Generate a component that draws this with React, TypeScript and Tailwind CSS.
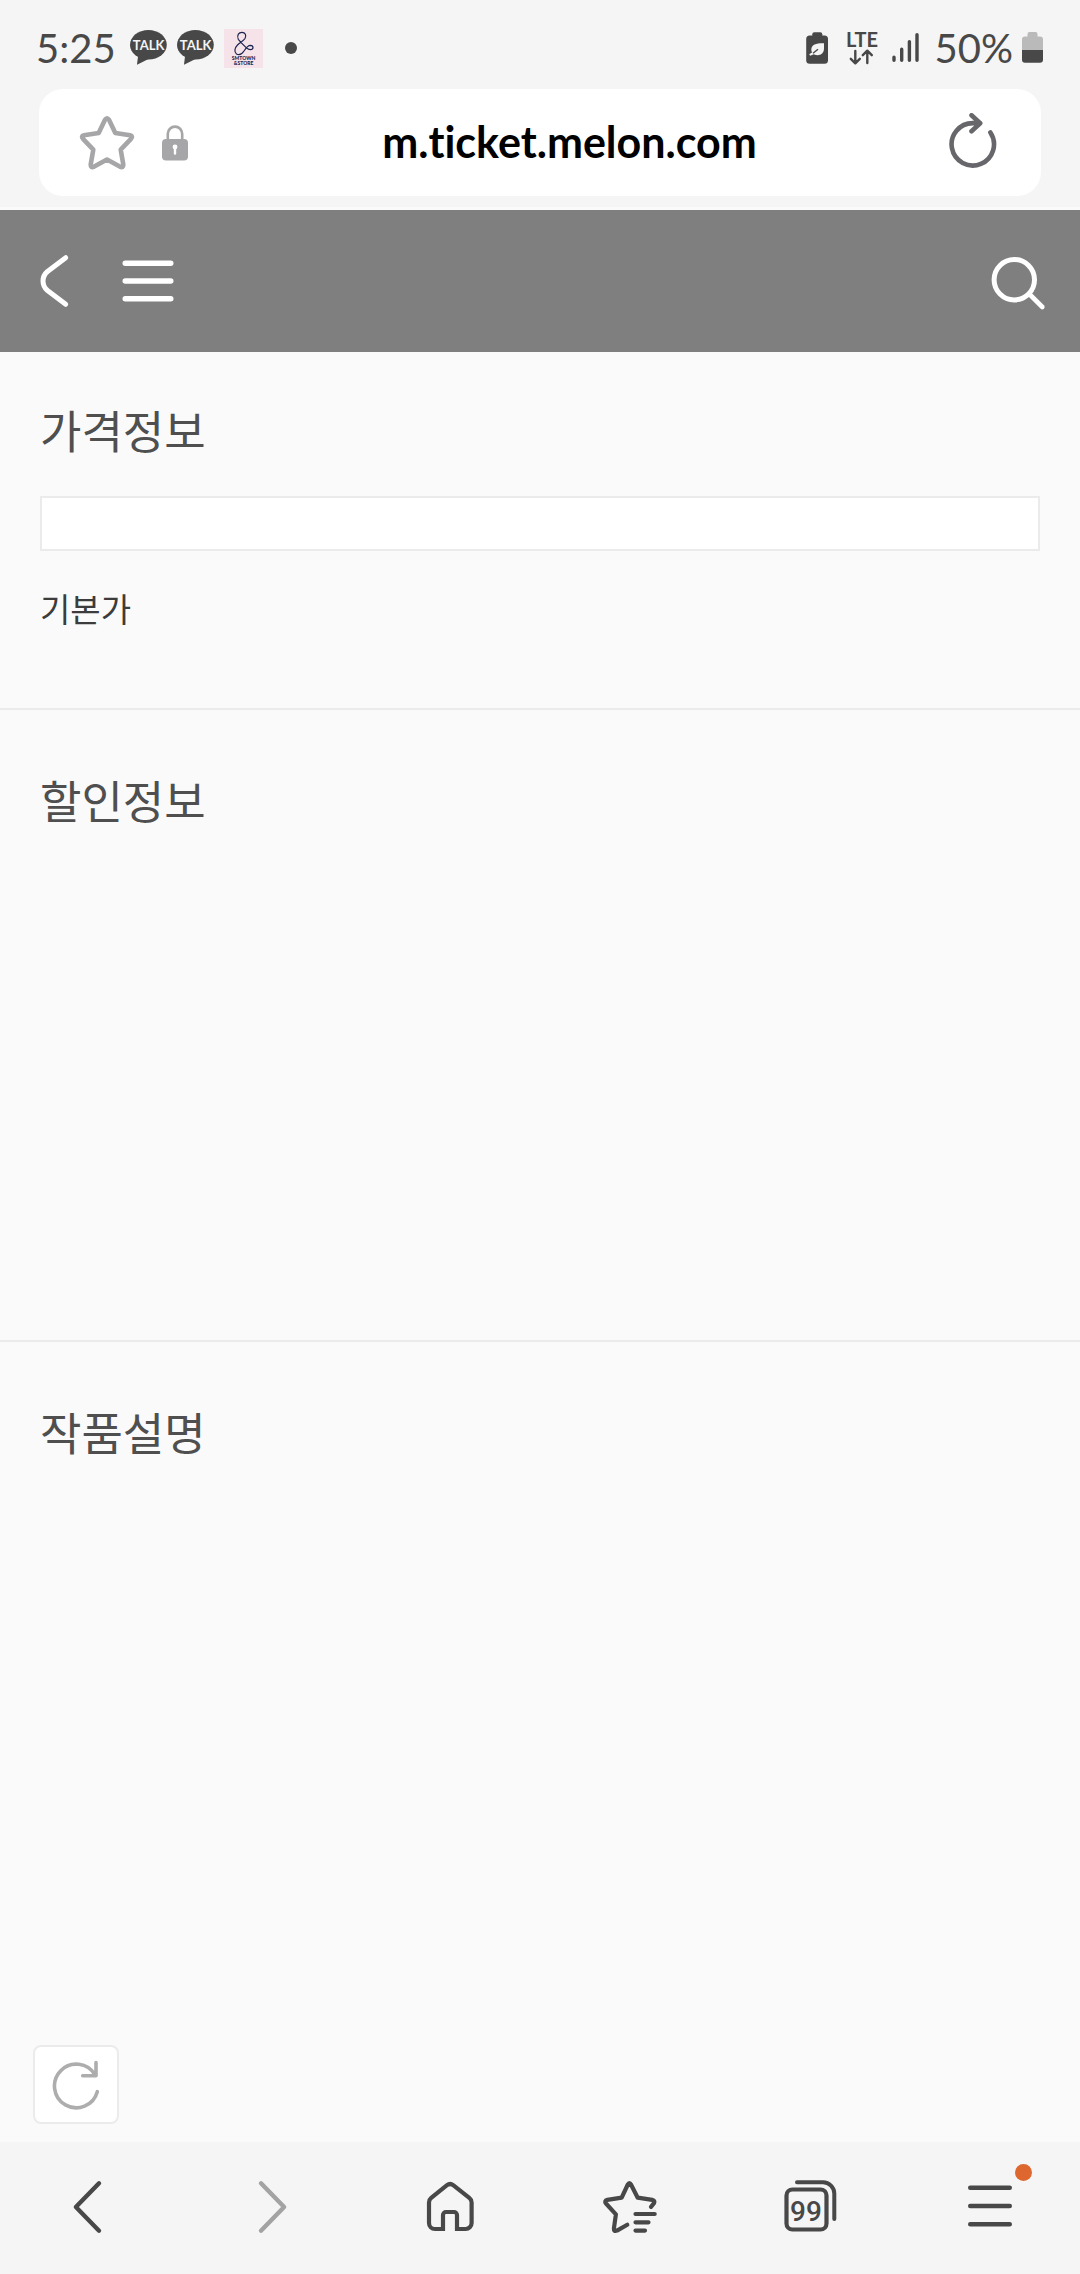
import React from "react";

const strokeProps = {
  fill: "none",
  stroke: "currentColor",
  strokeLinecap: "round" as const,
  strokeLinejoin: "round" as const,
};

const TalkIcon = () => (
  <svg width="38" height="36" viewBox="0 0 38 36" className="text-[#484848]">
    <ellipse cx="18.4" cy="14.8" rx="18.4" ry="14.8" fill="currentColor" />
    <path d="M8.3 24L7 34.8L18.5 29Z" fill="currentColor" />
    <text x="18.6" y="20" textAnchor="middle" fill="#f5f5f5" className="text-[13px] font-bold">
      TALK
    </text>
  </svg>
);

const StoreIcon = () => (
  <svg width="39" height="39" viewBox="0 0 39 39">
    <rect width="39" height="39" fill="#f6e3e9" />
    <path
      d="M14.3 10.3C12.5 6 15 3.3 17.9 3.3C21.3 3.3 22.7 6.5 21 9.5C19.5 12 16 13.5 13.5 16C10.5 19 10 23 12.5 25C15.5 26.5 18 25 20 22C22 19 24 16.3 26.3 16.3C30 16.5 29.8 20.7 26.3 20.7C23.5 20.7 20 17 14.3 10.3Z"
      fill="none"
      stroke="#1b2350"
      strokeWidth="1.2"
    />
    <g fill="#1b2350" textAnchor="middle" className="text-[5px] font-black">
      <text x="19.6" y="31">SMTOWN</text>
      <text x="19.6" y="36">&amp;STORE</text>
    </g>
  </svg>
);

const PowerSavingIcon = () => (
  <svg width="24" height="34" viewBox="0 0 24 34" className="text-[#484848]">
    <rect x="7.3" y="1.3" width="10" height="6" rx="2" fill="currentColor" />
    <rect x="1.2" y="4.5" width="21.8" height="28.2" rx="3.5" fill="currentColor" />
    <path
      d="M19 12.2C12 12 6.5 13 6.3 18.5C6.3 19.6 6.6 20.6 7 21.4L4.2 23.3L5.2 24.8L8.8 23.2C13.5 25.6 19 23.5 19 17.5Z"
      fill="#f5f5f5"
    />
    <path d="M8 22.2L13 18.2" stroke="#484848" strokeWidth="1.4" />
  </svg>
);

const LteIcon = () => (
  <svg width="34" height="44" viewBox="0 -4 34 44" className="text-[#484848]">
    <text x="17" y="17" textAnchor="middle" fill="currentColor" className="text-[20px] font-bold">
      LTE
    </text>
    <path
      {...strokeProps}
      strokeWidth="2.4"
      d="M10.3 21V33M5.8 28.8L10.3 33.3L14.8 28.8M22.3 33V21M17.8 25.2L22.3 20.7L26.8 25.2"
    />
  </svg>
);

const SignalIcon = () => (
  <svg width="30" height="32" viewBox="0 0 30 32" className="text-[#484848]">
    <path {...strokeProps} strokeWidth="3.4" d="M3 25.2V28.2M10.7 17.2V28.2M18.4 9.6V28.2M26 2.6V28.2" />
  </svg>
);

const BatteryIcon = () => (
  <svg width="24" height="34" viewBox="0 0 24 34">
    <path
      d="M6.5 5.5V3a2 2 0 0 1 2-2h6a2 2 0 0 1 2 2v2.5H19a3 3 0 0 1 3 3V19H1V8.5a3 3 0 0 1 3-3Z"
      fill="#bababa"
    />
    <path d="M1 19h21v9.7a3 3 0 0 1-3 3H4a3 3 0 0 1-3-3Z" fill="#484848" />
  </svg>
);

const StarIcon = () => (
  <svg width="60" height="60" viewBox="0 0 60 60">
    <path
      {...strokeProps}
      strokeWidth="4.6"
      d="M28 6.8Q30 3.6 32 6.8L38.3 20L53 22.2Q56.4 23 54 25.8L43.7 36.6L46.3 51.5Q46.4 55 43.2 53.8L30 46.6L16.8 53.8Q13.6 55 13.7 51.5L16.3 36.6L6 25.8Q3.6 23 7 22.2L21.7 20Z"
    />
  </svg>
);

const LockIcon = () => (
  <svg width="26" height="36" viewBox="0 0 26 36">
    <path {...strokeProps} strokeWidth="2.6" d="M5.8 15V8.8a7.2 7.2 0 0 1 14.4 0V15" />
    <rect x="0" y="14" width="26" height="21.5" rx="4" fill="currentColor" />
    <circle cx="13" cy="22" r="2.4" fill="#fff" />
    <path d="M13 22V28.5" stroke="#fff" strokeWidth="2.4" strokeLinecap="round" />
  </svg>
);

const ReloadIcon = () => (
  <svg width="60" height="60" viewBox="0 0 60 60">
    <path
      {...strokeProps}
      strokeWidth="4.6"
      d="M47.4 19.5A21.2 21.2 0 1 1 30 10.1L37 10.1M28.5 2.3L37.2 10.3L28.5 18.3"
    />
  </svg>
);

const RefreshIcon = () => (
  <svg width="50" height="50" viewBox="0 0 50 50">
    <path
      {...strokeProps}
      strokeWidth="3.6"
      d="M46.3 31.7A21.8 21.8 0 1 1 44 14.8M45 2.5V15.7H31.7"
    />
  </svg>
);

const SearchIcon = () => (
  <svg width="60" height="60" viewBox="0 0 60 60">
    <circle {...strokeProps} strokeWidth="5" cx="26.3" cy="28.7" r="20.2" />
    <path {...strokeProps} strokeWidth="4.6" d="M41.3 43L54.3 56" />
  </svg>
);

const HomeIcon = () => (
  <svg width="60" height="60" viewBox="0 0 60 60">
    <path
      d="M25 52H15a6 6 0 0 1-6-6V25.5a6 6 0 0 1 2.2-4.6L27 8.2a5 5 0 0 1 6.2 0L49.3 20.9a6 6 0 0 1 2.3 4.6V46a6 6 0 0 1-6 6H37V38a3 3 0 0 0-3-3h-8a3 3 0 0 0-3 3v16"
      fill="none"
      stroke="currentColor"
      strokeWidth="4.2"
    />
  </svg>
);

const BookmarksIcon = () => (
  <svg width="60" height="60" viewBox="0 0 60 60">
    <path
      {...strokeProps}
      strokeWidth="4.2"
      d="M27.3 47.7L17 53.6Q13.6 54.8 13.9 51.5L15.9 37.3L6 26.5Q4 23.7 7.3 22.9L21.7 20.7L27.8 7.5Q29.4 4.5 31 7.5L37.7 20.7L52.2 22.9Q55.3 23.7 54 26.2L51 29.8M35.5 37H54.7M35.5 45.3H48.5M35.5 53.6H45"
    />
  </svg>
);

const TabsIcon = () => (
  <svg width="60" height="60" viewBox="0 0 60 60">
    <rect {...strokeProps} strokeWidth="4.2" x="6.5" y="12.5" width="40" height="40" rx="6" />
    <path {...strokeProps} strokeWidth="4" d="M17 5.3H43a11.3 11.3 0 0 1 11.3 11.3V42" />
    <text
      x="26"
      y="44"
      textAnchor="middle"
      fill="currentColor"
      className="font-[Roboto] text-[28px] font-medium"
    >
      99
    </text>
  </svg>
);

interface LineIconProps {
  d: string;
  width: number;
}

const LineIcon: React.FC<LineIconProps> = ({ d, width }) => (
  <svg width="60" height="60" viewBox="0 0 60 60">
    <path {...strokeProps} strokeWidth={width} d={d} />
  </svg>
);

const StatusBar = () => (
  <div className="flex items-center justify-between pt-[22px] pb-[15px] pl-9 pr-[35px] text-[40px] leading-[52px] text-[#484848]">
    <div className="flex items-center">
      <span className="mr-[14px]">5:25</span>
      <div className="flex items-center gap-[9px]">
        <TalkIcon />
        <TalkIcon />
        <StoreIcon />
      </div>
      <span className="ml-[22px] size-3 rounded-full bg-[#484848]" />
    </div>
    <div className="flex items-center">
      <PowerSavingIcon />
      <span className="ml-4 mr-3">
        <LteIcon />
      </span>
      <SignalIcon />
      <span className="ml-[14px] mr-2">50%</span>
      <BatteryIcon />
    </div>
  </div>
);

const AddressBar = () => (
  <div className="mx-[39px] flex h-[107px] items-center rounded-3xl bg-white px-[38px]">
    <button type="button" aria-label="Bookmark" className="text-[#a6a6a8]">
      <StarIcon />
    </button>
    <span className="ml-[25px] text-[#a6a6a8]">
      <LockIcon />
    </span>
    <input
      type="text"
      aria-label="Address"
      defaultValue="m.ticket.melon.com"
      className="min-w-0 flex-1 bg-transparent pl-2 text-center text-[43px] font-bold text-black outline-none [font-variant-ligatures:none]"
    />
    <button type="button" aria-label="Reload" className="text-[#67676b]">
      <ReloadIcon />
    </button>
  </div>
);

const SiteHeader = () => (
  <header className="flex h-[142px] items-center gap-8 bg-[#7f7f7f] pl-[26px] pr-8 text-white">
    <button type="button" aria-label="Back">
      <LineIcon width={5} d="M39.7 6.7L21.5 20.5C15.5 25.5 15.5 34.5 21.5 39.5L39.7 53.3" />
    </button>
    <button type="button" aria-label="Menu">
      <LineIcon width={5.4} d="M7.2 12.2H52.8M7.2 30H52.8M7.2 47.8H52.8" />
    </button>
    <button type="button" aria-label="Search" className="ml-auto">
      <SearchIcon />
    </button>
  </header>
);

const BrowserNav = () => (
  <nav className="flex bg-[#f5f5f5] pt-[35px] pb-[37px] text-[#484848]">
    <button type="button" aria-label="Back" className="flex flex-1 justify-center">
      <LineIcon width={4.4} d="M39 6.3L15.9 30L39 53.7" />
    </button>
    <button type="button" aria-label="Forward" className="flex flex-1 justify-center text-[#a3a3a3]">
      <LineIcon width={4.4} d="M21 6.3L44.1 30L21 53.7" />
    </button>
    <button type="button" aria-label="Home" className="flex flex-1 justify-center">
      <HomeIcon />
    </button>
    <button type="button" aria-label="Bookmarks" className="flex flex-1 justify-center">
      <BookmarksIcon />
    </button>
    <button type="button" aria-label="Tabs" className="flex flex-1 justify-center">
      <TabsIcon />
    </button>
    <button type="button" aria-label="Tools" className="flex flex-1 justify-center">
      <span className="relative">
        <LineIcon width={4.4} d="M10.2 10.7H49.8M10.2 29H49.8M10.2 47.3H49.8" />
        <span className="absolute -top-[13px] -right-3 size-[17px] rounded-full bg-[#dd672f]" />
      </span>
    </button>
  </nav>
);

const headingClass = "text-[45px] leading-[60px] text-[#4f4f4f]";

export default function App() {
  return (
    <div className="flex min-h-screen flex-col bg-[#fafafa] font-['Lato','Noto_Sans_CJK_KR',sans-serif]">
      <div className="mb-[3px] bg-[#f5f5f5] pb-[11px]">
        <StatusBar />
        <AddressBar />
      </div>
      <SiteHeader />

      <main className="relative flex flex-1 flex-col">
        <section className="border-b-2 border-[#ebebeb] px-10 pt-[50px] pb-[75px]">
          <h2 id="price-title" className={headingClass}>
            가격정보
          </h2>
          <input
            type="text"
            aria-labelledby="price-title"
            className="mt-[34px] block h-[55px] w-full border-2 border-[#ebebeb] bg-white px-4 text-[33px] outline-none"
          />
          <p className="mt-[34px] text-[33px] leading-[48px] text-[#3c3c3c]">기본가</p>
        </section>

        <section className="min-h-[632px] border-b-2 border-[#ebebeb] px-10 pt-[62px]">
          <h2 className={headingClass}>할인정보</h2>
        </section>

        <section className="flex-1 px-10 pt-[62px]">
          <h2 className={headingClass}>작품설명</h2>
        </section>

        <button
          type="button"
          aria-label="Refresh"
          className="absolute bottom-[18px] left-[33px] flex h-[79px] w-[86px] items-center justify-center rounded-lg border-2 border-[#ebebeb] bg-white text-[#adadad]"
        >
          <RefreshIcon />
        </button>
      </main>

      <BrowserNav />
    </div>
  );
}
